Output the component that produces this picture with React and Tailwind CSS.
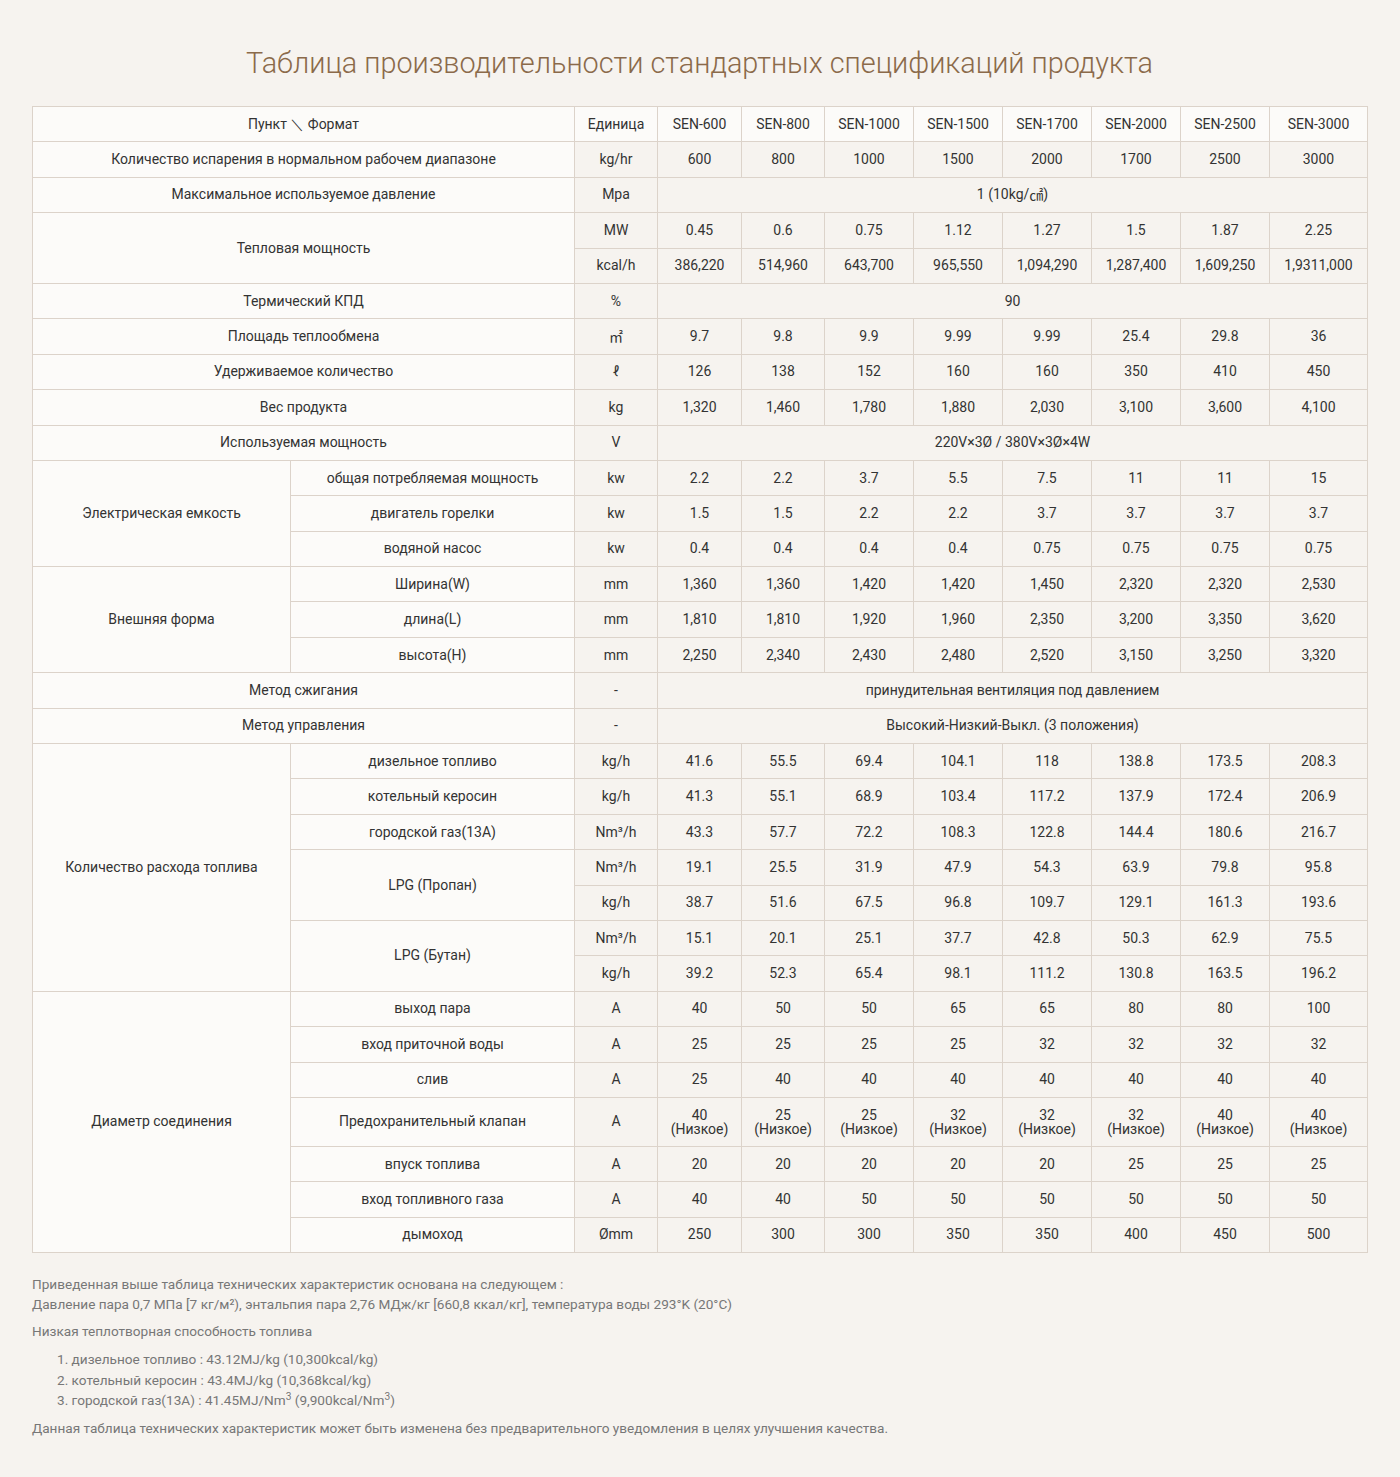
const models = ["SEN-600", "SEN-800", "SEN-1000", "SEN-1500", "SEN-1700", "SEN-2000", "SEN-2500", "SEN-3000"];

const L = "border border-[#dcd3ca] bg-[#fcfbf9] text-center";
const D = "border border-[#dcd3ca] bg-[#f6f3ef] text-center";

const Vals = ({ v }) => v.map((x, i) => <td key={i} className={D}>{x}</td>);

const Row1 = ({ label, unit, v }) => (
  <tr className="h-[35.4px]">
    <td colSpan={2} className={L}>{label}</td>
    <td className={D}>{unit}</td>
    <Vals v={v} />
  </tr>
);

const RowSpan = ({ label, unit, text }) => (
  <tr className="h-[35.4px]">
    <td colSpan={2} className={L}>{label}</td>
    <td className={D}>{unit}</td>
    <td colSpan={8} className={D}>{text}</td>
  </tr>
);

const Group = ({ label, rows }) =>
  rows.map((r, i) => (
    <tr key={i} className={r.tall ? "h-[49px]" : "h-[35.4px]"}>
      {i === 0 && <td rowSpan={rows.length} className={L}>{label}</td>}
      {r.sub !== undefined && <td rowSpan={r.subSpan || 1} className={L}>{r.sub}</td>}
      <td className={D}>{r.unit}</td>
      <Vals v={r.v} />
    </tr>
  ));

const valve = ["40", "25", "25", "32", "32", "32", "40", "40"].map((n) => (
  <span key={n} className="leading-[14px] block">{n}<br />(Низкое)</span>
));

const cjk = "font-['Noto_Sans_CJK_KR',sans-serif] leading-[1] inline-block align-[-1px]";

export default function App() {
  return (
    <div className="min-h-[1477px] bg-[#f6f3ef] font-['Roboto',sans-serif] text-[14px] text-[#333]">
      <div className="w-[1335px] ml-[32px] pt-[43px] pb-[38px]">
        <h1 className="text-center text-[28.8px] font-light text-[#8b6a4a] leading-[40px] mb-[23px]">
          Таблица производительности стандартных спецификаций продукта
        </h1>
        <table className="w-[1335px] table-fixed border-collapse">
          <colgroup>
            <col className="w-[258px]" />
            <col className="w-[284px]" />
            <col className="w-[83px]" />
            <col className="w-[84px]" />
            <col className="w-[83px]" />
            <col className="w-[89px]" />
            <col className="w-[89px]" />
            <col className="w-[89px]" />
            <col className="w-[89px]" />
            <col className="w-[89px]" />
            <col className="w-[98px]" />
          </colgroup>
          <tbody>
            <tr className="h-[35.4px]">
              <td colSpan={2} className={L}>Пункт ＼ Формат</td>
              <td className={L}>Единица</td>
              {models.map((m) => <td key={m} className={L}>{m}</td>)}
            </tr>
            <Row1 label="Количество испарения в нормальном рабочем диапазоне" unit="kg/hr" v={["600", "800", "1000", "1500", "2000", "1700", "2500", "3000"]} />
            <RowSpan label="Максимальное используемое давление" unit="Mpa" text={<>1 (10kg/<span className={cjk}>㎠</span>)</>} />
            <tr className="h-[35.4px]">
              <td colSpan={2} rowSpan={2} className={L}>Тепловая мощность</td>
              <td className={D}>MW</td>
              <Vals v={["0.45", "0.6", "0.75", "1.12", "1.27", "1.5", "1.87", "2.25"]} />
            </tr>
            <tr className="h-[35.4px]">
              <td className={D}>kcal/h</td>
              <Vals v={["386,220", "514,960", "643,700", "965,550", "1,094,290", "1,287,400", "1,609,250", "1,9311,000"]} />
            </tr>
            <RowSpan label="Термический КПД" unit="%" text="90" />
            <Row1 label="Площадь теплообмена" unit={<span className={cjk}>㎡</span>} v={["9.7", "9.8", "9.9", "9.99", "9.99", "25.4", "29.8", "36"]} />
            <Row1 label="Удерживаемое количество" unit="ℓ" v={["126", "138", "152", "160", "160", "350", "410", "450"]} />
            <Row1 label="Вес продукта" unit="kg" v={["1,320", "1,460", "1,780", "1,880", "2,030", "3,100", "3,600", "4,100"]} />
            <RowSpan label="Используемая мощность" unit="V" text="220V×3Ø / 380V×3Ø×4W" />
            <Group
              label="Электрическая емкость"
              rows={[
                { sub: "общая потребляемая мощность", unit: "kw", v: ["2.2", "2.2", "3.7", "5.5", "7.5", "11", "11", "15"] },
                { sub: "двигатель горелки", unit: "kw", v: ["1.5", "1.5", "2.2", "2.2", "3.7", "3.7", "3.7", "3.7"] },
                { sub: "водяной насос", unit: "kw", v: ["0.4", "0.4", "0.4", "0.4", "0.75", "0.75", "0.75", "0.75"] },
              ]}
            />
            <Group
              label="Внешняя форма"
              rows={[
                { sub: "Ширина(W)", unit: "mm", v: ["1,360", "1,360", "1,420", "1,420", "1,450", "2,320", "2,320", "2,530"] },
                { sub: "длина(L)", unit: "mm", v: ["1,810", "1,810", "1,920", "1,960", "2,350", "3,200", "3,350", "3,620"] },
                { sub: "высота(H)", unit: "mm", v: ["2,250", "2,340", "2,430", "2,480", "2,520", "3,150", "3,250", "3,320"] },
              ]}
            />
            <RowSpan label="Метод сжигания" unit="-" text="принудительная вентиляция под давлением" />
            <RowSpan label="Метод управления" unit="-" text="Высокий-Низкий-Выкл. (3 положения)" />
            <Group
              label="Количество расхода топлива"
              rows={[
                { sub: "дизельное топливо", unit: "kg/h", v: ["41.6", "55.5", "69.4", "104.1", "118", "138.8", "173.5", "208.3"] },
                { sub: "котельный керосин", unit: "kg/h", v: ["41.3", "55.1", "68.9", "103.4", "117.2", "137.9", "172.4", "206.9"] },
                { sub: "городской газ(13A)", unit: "Nm³/h", v: ["43.3", "57.7", "72.2", "108.3", "122.8", "144.4", "180.6", "216.7"] },
                { sub: "LPG (Пропан)", subSpan: 2, unit: "Nm³/h", v: ["19.1", "25.5", "31.9", "47.9", "54.3", "63.9", "79.8", "95.8"] },
                { unit: "kg/h", v: ["38.7", "51.6", "67.5", "96.8", "109.7", "129.1", "161.3", "193.6"] },
                { sub: "LPG (Бутан)", subSpan: 2, unit: "Nm³/h", v: ["15.1", "20.1", "25.1", "37.7", "42.8", "50.3", "62.9", "75.5"] },
                { unit: "kg/h", v: ["39.2", "52.3", "65.4", "98.1", "111.2", "130.8", "163.5", "196.2"] },
              ]}
            />
            <Group
              label="Диаметр соединения"
              rows={[
                { sub: "выход пара", unit: "A", v: ["40", "50", "50", "65", "65", "80", "80", "100"] },
                { sub: "вход приточной воды", unit: "A", v: ["25", "25", "25", "25", "32", "32", "32", "32"] },
                { sub: "слив", unit: "A", v: ["25", "40", "40", "40", "40", "40", "40", "40"] },
                { sub: "Предохранительный клапан", unit: "A", v: valve, tall: true },
                { sub: "впуск топлива", unit: "A", v: ["20", "20", "20", "20", "20", "25", "25", "25"] },
                { sub: "вход топливного газа", unit: "A", v: ["40", "40", "50", "50", "50", "50", "50", "50"] },
                { sub: "дымоход", unit: "Ømm", v: ["250", "300", "300", "350", "350", "400", "450", "500"] },
              ]}
            />
          </tbody>
        </table>

        <div className="mt-[21px] text-[13.6px] leading-[20px] text-[#777]">
          <p>Приведенная выше таблица технических характеристик основана на следующем :</p>
          <p>Давление пара 0,7 МПа [7 кг/м²), энтальпия пара 2,76 МДж/кг [660,8 ккал/кг], температура воды 293°K (20°C)</p>
          <p className="mt-[7px]">Низкая теплотворная способность топлива</p>
          <ol className="mt-[8px] pl-[25px] leading-[20.5px]">
            <li>1. дизельное топливо : 43.12MJ/kg (10,300kcal/kg)</li>
            <li>2. котельный керосин : 43.4MJ/kg (10,368kcal/kg)</li>
            <li>3. городской газ(13A) : 41.45MJ/Nm<sup>3</sup> (9,900kcal/Nm<sup>3</sup>)</li>
          </ol>
          <p className="mt-[7px]">Данная таблица технических характеристик может быть изменена без предварительного уведомления в целях улучшения качества.</p>
        </div>
      </div>
    </div>
  );
}
